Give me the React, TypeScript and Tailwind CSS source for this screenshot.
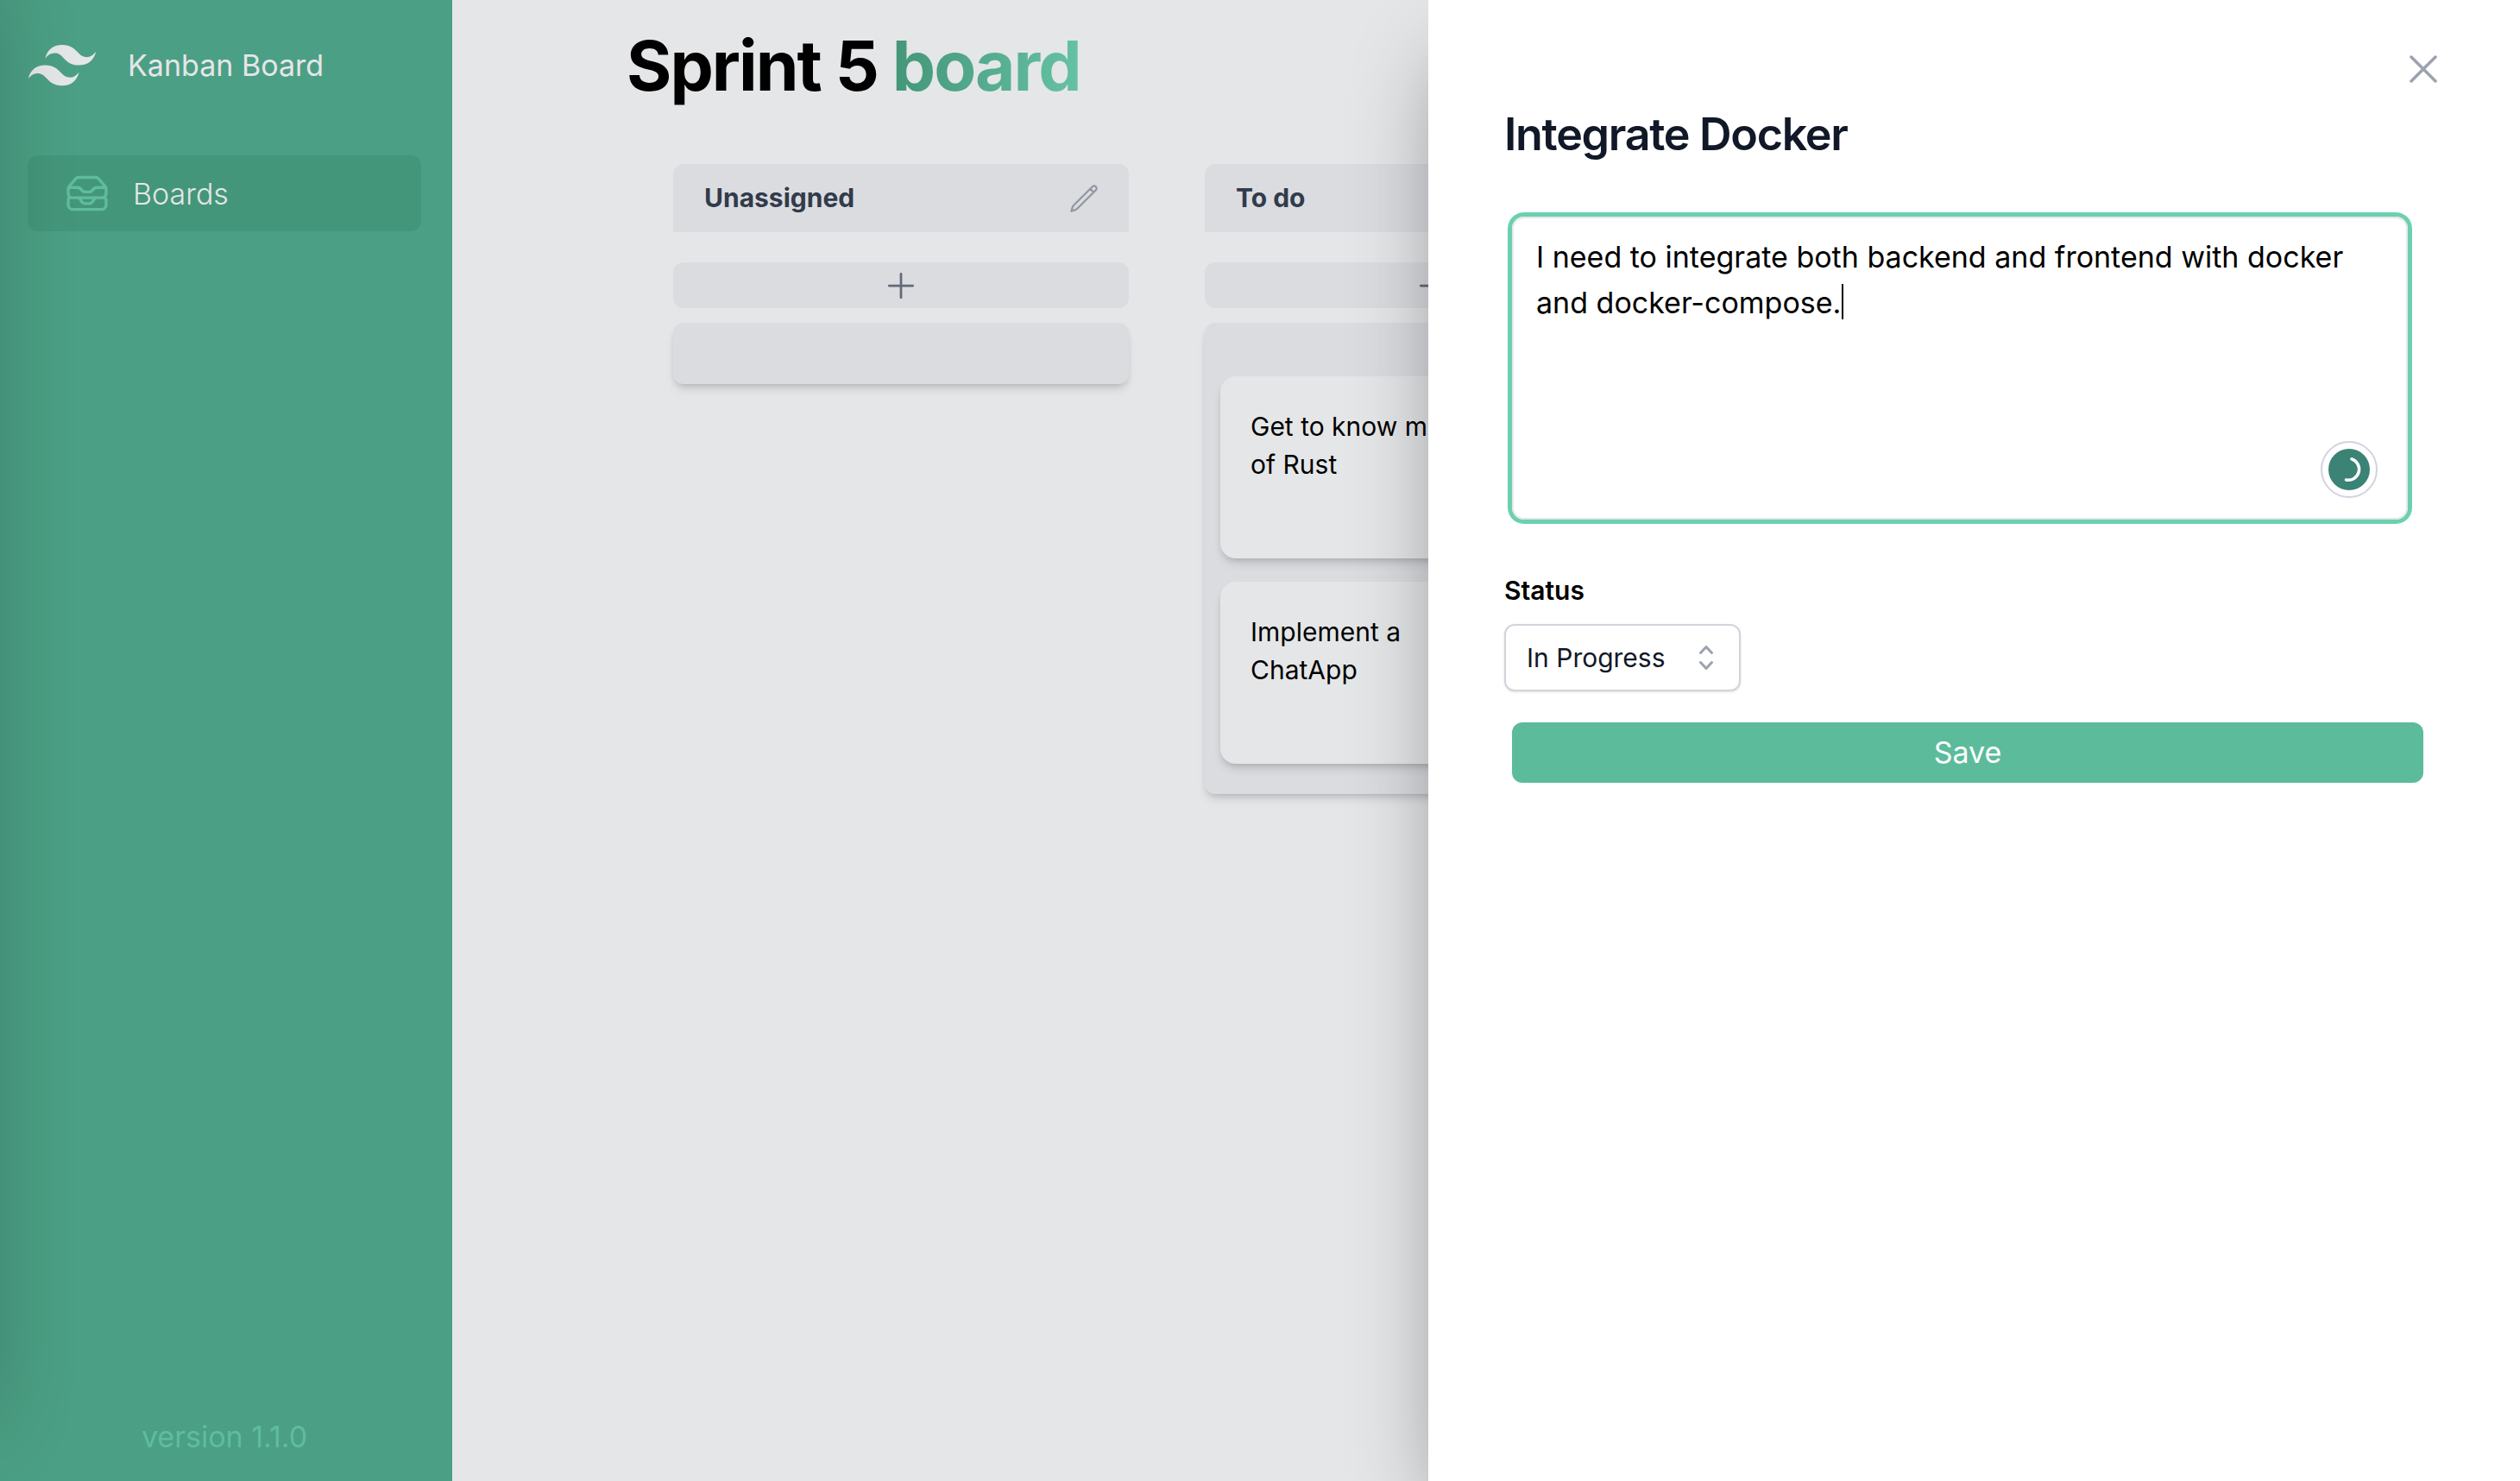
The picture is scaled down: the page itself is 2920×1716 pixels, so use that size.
import React from "react";
import { HiOutlineInboxStack, HiOutlinePlus, HiOutlineXMark, HiOutlinePencil } from "react-icons/hi2";

const font = { fontFamily: 'Inter, "Liberation Sans", sans-serif' };

const columns = [
  { name: "Unassigned", cards: [] as string[] },
  { name: "To do", cards: ["Get to know more of Rust", "Implement a ChatApp"] },
];

function Logo() {
  return (
    <svg viewBox="0 0 54 33" className="h-12 w-20" fill="#e5e6e8" aria-hidden="true">
      <path
        fillRule="evenodd"
        clipRule="evenodd"
        d="M27 0c-7.2 0-11.7 3.6-13.5 10.8 2.7-3.6 5.85-4.95 9.45-4.05 2.054.513 3.522 2.004 5.147 3.653C30.744 13.09 33.808 16.2 40.5 16.2c7.2 0 11.7-3.6 13.5-10.8-2.7 3.6-5.85 4.95-9.45 4.05-2.054-.513-3.522-2.004-5.147-3.653C36.756 3.11 33.692 0 27 0zM13.5 16.2C6.3 16.2 1.8 19.8 0 27c2.7-3.6 5.85-4.95 9.45-4.05 2.054.514 3.522 2.004 5.147 3.653C17.244 29.29 20.308 32.4 27 32.4c7.2 0 11.7-3.6 13.5-10.8-2.7 3.6-5.85 4.95-9.45 4.05-2.054-.513-3.522-2.004-5.147-3.653C23.256 19.31 20.192 16.2 13.5 16.2z"
      />
    </svg>
  );
}

function Sidebar() {
  return (
    <aside className="flex w-[524px] shrink-0 flex-col bg-[#4b9f84] px-8 pb-4 pt-12">
      <div className="flex h-14 items-center gap-9">
        <Logo />
        <span className="text-[34px] leading-[56px] text-[#e5e6e8]">Kanban Board</span>
      </div>
      <nav className="mt-[76px] mr-1">
        <a href="#boards" className="flex h-[88px] items-center rounded-xl bg-[#44967a] pl-[42px] text-[34px] font-light text-[#e5e6e8]">
          <HiOutlineInboxStack className="mr-[26px] size-[54px] text-[#5fbc9d]" />
          Boards
        </a>
      </nav>
      <p className="mt-auto mr-1 text-center text-[34px] leading-[70px] text-[#5fbc9d]">version 1.1.0</p>
    </aside>
  );
}

function Column({ name, cards }: { name: string; cards: string[] }) {
  return (
    <section className="w-[528px] shrink-0">
      <header className="flex h-[79px] items-center justify-between rounded-t-xl bg-[#dbdce0] pl-9 pr-[34px]">
        <h2 className="text-[30px] font-bold text-[#323b4b]">{name}</h2>
        <button type="button" aria-label={"Rename " + name} className="text-[#9297a3]">
          <HiOutlinePencil className="size-9" />
        </button>
      </header>
      <button
        type="button"
        aria-label={"Add card to " + name}
        className="mt-[35px] flex h-[53px] w-full items-center justify-center rounded-xl bg-[#dbdce0] text-[#626a79]"
      >
        <HiOutlinePlus className="size-11" />
      </button>
      <div className="mt-[17px] flex flex-col gap-[27px] rounded-xl bg-[#dbdce0] px-[18px] pb-[35px] pt-9 shadow-[0_8px_12px_-2px_rgba(0,0,0,0.1),0_4px_8px_-4px_rgba(0,0,0,0.2)]">
        {cards.map((card, i) => (
          <article
            key={card}
            className={
              (i === 0 ? "mt-[26px] " : "") +
              "h-[211px] rounded-[18px] bg-[#e5e6e8] px-[35px] py-9 shadow-[0_8px_12px_-2px_rgba(0,0,0,0.1),0_4px_8px_-4px_rgba(0,0,0,0.2)]"
            }
          >
            <p className="max-w-[280px] text-[30px] leading-[44px] text-black">{card}</p>
          </article>
        ))}
      </div>
    </section>
  );
}

function Board() {
  return (
    <main className="min-w-0 flex-1 bg-[#e5e6e8] pt-[30px]">
      <h1 className="ml-[202px] text-[80px] font-bold leading-[92px] tracking-tight text-black">
        Sprint 5{" "}
        <span className="bg-linear-to-r from-[#449678] to-[#66c2a4] bg-clip-text text-transparent">board</span>
      </h1>
      <div className="ml-64 mt-[68px] flex items-start gap-[88px]">
        {columns.map((column) => (
          <Column key={column.name} {...column} />
        ))}
      </div>
    </main>
  );
}

function TaskDrawer() {
  return (
    <div
      role="dialog"
      aria-labelledby="task-title"
      className="absolute inset-y-0 right-0 flex w-[1265px] flex-col bg-white pl-[88px] pr-28 pt-[52px] shadow-[0_50px_100px_-24px_rgba(0,0,0,0.45)]"
    >
      <button type="button" aria-label="Close" className="-mr-7 self-end text-[#9ca3af]">
        <HiOutlineXMark className="size-14" />
      </button>
      <h2 id="task-title" className="mt-3 text-[52px] font-semibold leading-[72px] tracking-tight text-[#111827]">
        Integrate Docker
      </h2>
      <form className="flex flex-col" onSubmit={(e) => e.preventDefault()}>
        <div className="relative mt-[59px] ml-[9px] mr-[18px]">
          <textarea
            aria-label="Description"
            defaultValue="I need to integrate both backend and frontend with docker and docker-compose."
            className="block h-[351px] w-full resize-none rounded-[14px] border-2 border-[#e5e7eb] px-[26px] py-[18px] text-[34px] leading-[53px] text-black outline-none ring-5 ring-[#6bd0af]"
          />
          <span className="pointer-events-none absolute left-[382px] top-[78px] h-[41px] w-0.5 bg-black" />
          <span className="absolute bottom-[25px] right-[35px]">
            <svg viewBox="0 0 66 66" className="size-[66px]" fill="none" aria-hidden="true">
              <circle cx="33" cy="33" r="32" fill="white" stroke="#d2d3e0" strokeWidth="2" />
              <circle cx="33" cy="33" r="24" fill="#3a8375" />
              <path d="M36 20.9a12.5 12.5 0 0 1-6.5 24.1" stroke="white" strokeWidth="3.5" strokeLinecap="round" />
            </svg>
          </span>
        </div>
        <label htmlFor="status" className="mt-[60px] text-[30px] font-semibold leading-[44px] text-black">
          Status
        </label>
        <div className="relative mt-[17px] self-start">
          <select
            id="status"
            defaultValue="In Progress"
            className="h-[78px] w-[274px] appearance-none rounded-xl border-2 border-[#d1d5db] bg-white pl-6 text-[30px] text-[#111827] shadow-sm"
          >
            <option>Unassigned</option>
            <option>To do</option>
            <option>In Progress</option>
          </select>
          <svg viewBox="0 0 20 20" className="pointer-events-none absolute right-5 top-[19px] size-10" fill="#9ca3af" aria-hidden="true">
            <path
              fillRule="evenodd"
              d="M10 3a.75.75 0 01.55.24l3.25 3.5a.75.75 0 11-1.1 1.02L10 4.852 7.3 7.76a.75.75 0 01-1.1-1.02l3.25-3.5A.75.75 0 0110 3zm-3.76 9.2a.75.75 0 011.06.04l2.7 2.908 2.7-2.908a.75.75 0 111.1 1.02l-3.25 3.5a.75.75 0 01-1.1 0l-3.25-3.5a.75.75 0 01.04-1.06z"
            />
          </svg>
        </div>
        <button type="submit" className="mt-9 ml-[9px] h-[70px] rounded-xl bg-[#5cbb9b] text-[34px] leading-[70px] text-white">
          Save
        </button>
      </form>
    </div>
  );
}

export default function App() {
  return (
    <div className="relative flex min-h-screen overflow-hidden" style={font}>
      <Sidebar />
      <Board />
      <TaskDrawer />
      <div className="pointer-events-none absolute inset-y-0 -left-20 w-20 -translate-y-12 shadow-[0_0_100px_-24px_rgba(0,0,0,0.45)]" />
    </div>
  );
}
